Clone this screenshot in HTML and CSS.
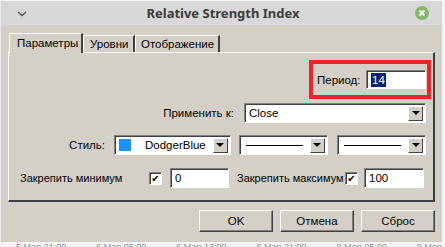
FILE: index.html
```html
<!DOCTYPE html>
<html lang="ru">
<head>
    <meta charset="UTF-8">
    <title>Relative Strength Index</title>
    <link rel="stylesheet" href="styles.css">
</head>
<body>
    <div class="window">
        <div class="titlebar">
            <svg class="chevron" width="10" height="6" viewBox="0 0 10 6"><path d="M1 1 L5 4.5 L9 1" fill="none" stroke="#555" stroke-width="1.4"/></svg>
            <span class="title">Relative Strength Index</span>
            <span class="close">
                <svg width="14" height="14" viewBox="0 0 14 14"><circle cx="7" cy="7" r="7" fill="#8ab66b"/><path d="M4.5 4.5 L9.5 9.5 M9.5 4.5 L4.5 9.5" stroke="#fff" stroke-width="1.8"/></svg>
            </span>
        </div>

        <div class="content">
            <div class="tabs">
                <div class="tab active">Параметры</div>
                <div class="tab">Уровни</div>
                <div class="tab">Отображение</div>
            </div>

            <div class="panel">
                <div class="row row-period">
                    <div class="highlight">
                        <span class="label">Период:</span>
                        <span class="field period"><span class="selected">14</span></span>
                    </div>
                </div>

                <div class="row row-apply">
                    <span class="label apply-label">Применить к:</span>
                    <span class="combo apply">
                        <span class="combo-value">Close</span>
                        <span class="arrow"></span>
                    </span>
                </div>

                <div class="row row-style">
                    <span class="label style-label">Стиль:</span>
                    <span class="combo color">
                        <span class="swatch"></span>
                        <span class="combo-value">DodgerBlue</span>
                        <span class="arrow"></span>
                    </span>
                    <span class="combo line">
                        <span class="line-sample"></span>
                        <span class="arrow"></span>
                    </span>
                    <span class="combo line">
                        <span class="line-sample"></span>
                        <span class="arrow"></span>
                    </span>
                </div>

                <div class="row row-fix">
                    <span class="label fix-min">Закрепить минимум</span>
                    <span class="check">✔</span>
                    <span class="field fix-field">0</span>
                    <span class="label fix-max">Закрепить максимум</span>
                    <span class="check">✔</span>
                    <span class="field fix-field max">100</span>
                </div>
            </div>

            <div class="buttons">
                <button class="btn ok">OK</button>
                <button class="btn">Отмена</button>
                <button class="btn">Сброс</button>
            </div>
        </div>
    </div>

    <div class="axis">
        <span>5 Мар 21:00</span>
        <span>6 Мар 05:00</span>
        <span>6 Мар 13:00</span>
        <span>6 Мар 21:00</span>
        <span>9 Мар 05:00</span>
        <span>9 Мар 13:00</span>
    </div>
</body>
</html>
```

FILE: styles.css
```css
body {
    margin: 0;
    width: 445px;
    height: 247px;
    overflow: hidden;
    background: #f4f4f4;
    font-family: "Liberation Sans", Arial, sans-serif;
    font-size: 11.5px;
    color: #000;
}

/* === Window === */
.window {
    width: 441px;
    height: 241px;
    margin-top: 1px;
    border-left: 1px solid #e8e8e8;
    display: flex;
    flex-direction: column;
    background: #d4d0c8;
}

.titlebar {
    height: 24px;
    background: #d8d8d8;
    display: flex;
    align-items: center;
    padding: 0 13px 0 16px;
    flex-shrink: 0;
}

.chevron {
    margin-top: 1px;
}

.title {
    flex: 1;
    text-align: center;
    font-family: "Noto Sans", "DejaVu Sans", sans-serif;
    font-weight: bold;
    font-size: 13px;
    color: #3c3c3c;
    margin-left: 4px;
}

.close {
    display: flex;
}

.content {
    flex: 1;
    padding: 7px 7px 0 7px;
    display: flex;
    flex-direction: column;
}

.label {
    white-space: nowrap;
    flex-shrink: 0;
}

/* === Tabs === */
.tabs {
    display: flex;
    height: 20px;
    align-items: flex-end;
    padding-left: 1px;
}

.tab {
    height: 17px;
    padding: 0 5px;
    display: flex;
    align-items: center;
    border-top: 1px solid #fff;
    border-left: 1px solid #fff;
    border-right: 2px solid #404040;
    box-sizing: border-box;
    white-space: nowrap;
}

.tab.active {
    height: 20px;
    width: 74px;
    padding-left: 7px;
    padding-bottom: 1px;
    position: relative;
    z-index: 1;
    background: #d4d0c8;
    margin-bottom: -1px;
}

.tab:nth-child(2) {
    width: 52px;
    padding-left: 6px;
}

.tab:nth-child(3) {
    width: 85px;
    padding-left: 5px;
}

/* === Panel === */
.panel {
    height: 150px;
    border-top: 1px solid #fff;
    border-left: 1px solid #fff;
    border-right: 2px solid #404040;
    border-bottom: 2px solid #404040;
    box-sizing: border-box;
    padding: 7px 7px 0 10px;
    display: flex;
    flex-direction: column;
}

.row {
    display: flex;
    align-items: center;
}

.row-period {
    justify-content: flex-end;
    margin-right: -5px;
}

.highlight {
    border: 4px solid #e8262a;
    height: 39px;
    width: 122px;
    box-sizing: border-box;
    display: flex;
    align-items: center;
    padding-left: 4px;
}

.highlight .label {
    width: 49px;
}

.field {
    background: #fff;
    border: 1px solid;
    border-color: #808080 #fff #fff #808080;
    box-shadow: inset 1px 1px #404040;
    box-sizing: border-box;
    height: 20px;
    display: flex;
    align-items: center;
    padding-left: 4px;
    flex-shrink: 0;
}

.period {
    width: 60px;
    height: 19px;
}

.selected {
    background: #0a246a;
    color: #fff;
    padding: 0 1px;
    line-height: 14px;
}

.row-apply {
    margin-top: 4px;
}

.apply-label {
    width: 215px;
    text-align: right;
}

.combo {
    background: #fff;
    border: 1px solid;
    border-color: #808080 #fff #fff #808080;
    box-shadow: inset 1px 1px #404040;
    box-sizing: border-box;
    height: 20px;
    display: flex;
    align-items: center;
    padding: 2px 2px 2px 4px;
}

.combo-value {
    flex: 1;
}

.arrow {
    width: 15px;
    height: 15px;
    box-sizing: border-box;
    background: #d4d0c8;
    border-top: 1px solid #fff;
    border-left: 1px solid #fff;
    border-right: 1px solid #404040;
    border-bottom: 1px solid #404040;
    display: flex;
    align-items: center;
    justify-content: center;
}

.arrow::after {
    content: "";
    border-left: 4px solid transparent;
    border-right: 4px solid transparent;
    border-top: 4px solid #000;
}

.apply {
    width: 189px;
    margin-left: 10px;
}

.row-style {
    margin-top: 12px;
}

.style-label {
    width: 83px;
    text-align: right;
    padding-left: 3px;
}

.color {
    width: 118px;
    margin-left: 9px;
}

.swatch {
    width: 12px;
    height: 12px;
    background: #1e90ff;
    margin-right: 14px;
}

.line {
    width: 90px;
    margin-left: 8px;
    padding-left: 6px;
}

.line + .line {
    margin-left: 9px;
}

.line-sample {
    flex: 1;
    height: 1px;
    background: #000;
    margin-right: 7px;
}

.row-fix {
    margin-top: 13px;
}

.row-fix .label {
    font-size: 11px;
}

.fix-min {
    width: 130px;
    padding-left: 1px;
    box-sizing: border-box;
}

.check {
    width: 11px;
    height: 11px;
    flex-shrink: 0;
    background: #fff;
    border: 1px solid;
    border-color: #808080 #fff #fff #808080;
    box-shadow: inset 1px 1px #404040;
    font-family: "DejaVu Sans", sans-serif;
    font-size: 10px;
    line-height: 11px;
    text-align: center;
    margin-right: 8px;
}

.fix-field {
    width: 59px;
}

.fix-max {
    width: 108px;
    margin-left: 8px;
}

.fix-max + .check {
    margin-right: 6px;
}

.fix-field.max {
    width: 60px;
}

/* === Buttons === */
.buttons {
    display: flex;
    justify-content: flex-end;
    gap: 7px;
    margin-top: 8px;
}

.btn {
    width: 74px;
    height: 22px;
    font-family: "Liberation Sans", Arial, sans-serif;
    font-size: 11.5px;
    background: #d4d0c8;
    border: 1px solid;
    border-color: #fff #404040 #404040 #fff;
    box-shadow: inset -1px -1px #808080;
    padding: 0;
    color: #000;
}

/* === Chart axis behind dialog === */
.axis {
    display: flex;
    gap: 30px;
    padding-left: 16px;
    font-size: 9px;
    color: #8a94a6;
    line-height: 10px;
    white-space: nowrap;
}
```
